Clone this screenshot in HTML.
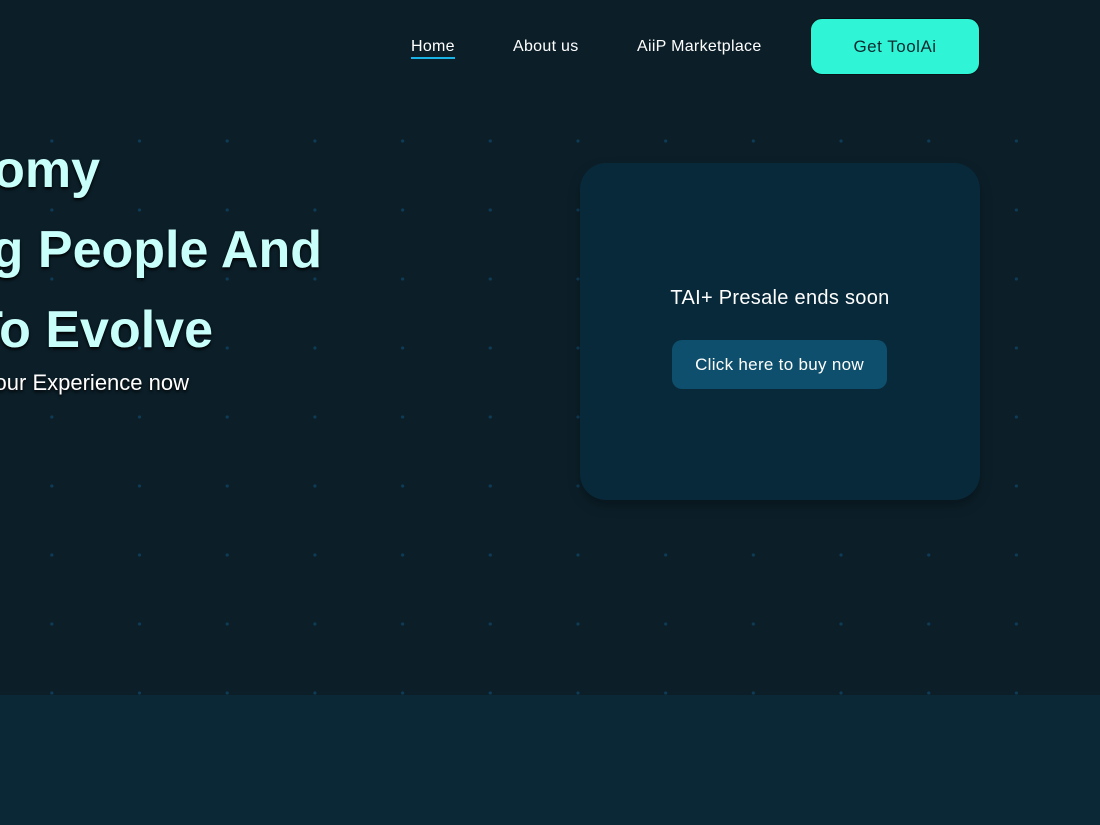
<!DOCTYPE html>
<html><head><meta charset="utf-8"><style>
*{margin:0;padding:0;box-sizing:border-box}
html,body{width:1100px;height:825px;overflow:hidden;background:#0c1f29;font-family:"Liberation Sans",sans-serif}
.dots{position:absolute;left:0;top:120px;width:1100px;height:580px;
background-image:radial-gradient(circle,#0e3c57 1.4px,transparent 1.8px);
background-size:87.7px 69px;background-position:8px -13.5px}
.band{position:absolute;left:0;top:695px;width:1100px;height:130px;background:#0a2836}
.nav a{position:absolute;top:38px;color:#fff;font-size:16px;letter-spacing:0.3px;text-decoration:none}
.home{border-bottom:2px solid #1ab3e6;padding-bottom:1px}
.get{position:absolute;left:810px;top:18px;width:170px;height:57px;border-radius:12px;background:#2ff5d6;color:#0c2a30;font-size:17px;letter-spacing:0.5px;display:flex;align-items:center;justify-content:center;border:1px solid #071417}
.clip{position:absolute;left:0;top:0;width:400px;height:420px;overflow:hidden}
.h{position:absolute;color:#c8fffb;font-weight:bold;font-size:52px;white-space:nowrap;text-shadow:0 2px 3px #000;text-align:right}
.card{position:absolute;left:580px;top:163px;width:400px;height:337px;background:#08293a;border-radius:26px;box-shadow:0 6px 12px rgba(0,0,0,.3)}
.card p{position:absolute;top:124px;width:100%;text-align:center;color:#fff;font-size:20px;letter-spacing:0.3px}
.buy{position:absolute;left:92px;top:177px;width:215px;height:49px;border-radius:10px;background:#0d4f6c;color:#fff;font-size:17px;letter-spacing:0.3px;display:flex;align-items:center;justify-content:center}
</style></head><body>
<div class="dots"></div>
<div class="band"></div>
<div class="nav">
<a class="home" style="left:411px">Home</a>
<a style="left:513px">About us</a>
<a style="left:637px">AiiP Marketplace</a>
</div>
<div class="get">Get ToolAi</div>
<div class="clip">
<div class="h" style="top:140px;right:300px">Economy</div>
<div class="h" style="top:220px;right:78px">ng People And</div>
<div class="h" style="top:300px;right:187px">To Evolve</div>
<div class="h" style="top:370px;right:211px;font-size:22px;font-weight:normal;color:#fff">your Experience now</div>
</div>
<div class="card"><p>TAI+ Presale ends soon</p><div class="buy">Click here to buy now</div></div>
</body></html>
